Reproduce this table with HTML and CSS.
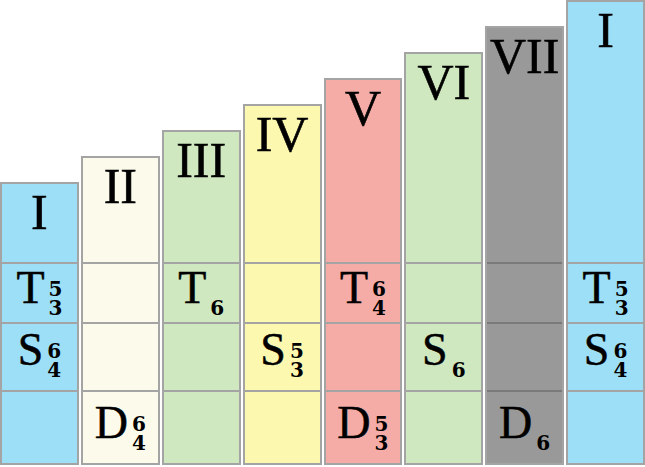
FILE: index.html
```html
<!DOCTYPE html>
<html>
<head>
<meta charset="utf-8">
<link rel="stylesheet" href="styles.css">
</head>
<body>
<div class="stair">
  <div class="col blue h1">
    <div class="head">I</div>
    <div class="row t"><span class="ch">T<span class="fig"><span>5</span><span>3</span></span></span></div>
    <div class="row s"><span class="ch">S<span class="fig"><span>6</span><span>4</span></span></span></div>
    <div class="row d"></div>
  </div>
  <div class="col cream h2">
    <div class="head">II</div>
    <div class="row t"></div>
    <div class="row s"></div>
    <div class="row d"><span class="ch">D<span class="fig"><span>6</span><span>4</span></span></span></div>
  </div>
  <div class="col green h3">
    <div class="head">III</div>
    <div class="row t"><span class="ch">T<span class="fig"><span></span><span>6</span></span></span></div>
    <div class="row s"></div>
    <div class="row d"></div>
  </div>
  <div class="col yellow h4">
    <div class="head">IV</div>
    <div class="row t"></div>
    <div class="row s"><span class="ch">S<span class="fig"><span>5</span><span>3</span></span></span></div>
    <div class="row d"></div>
  </div>
  <div class="col red h5">
    <div class="head">V</div>
    <div class="row t"><span class="ch">T<span class="fig"><span>6</span><span>4</span></span></span></div>
    <div class="row s"></div>
    <div class="row d"><span class="ch">D<span class="fig"><span>5</span><span>3</span></span></span></div>
  </div>
  <div class="col green h6">
    <div class="head">VI</div>
    <div class="row t"></div>
    <div class="row s"><span class="ch">S<span class="fig"><span></span><span>6</span></span></span></div>
    <div class="row d"></div>
  </div>
  <div class="col grey h7">
    <div class="head">VII</div>
    <div class="row t"></div>
    <div class="row s"></div>
    <div class="row d"><span class="ch">D<span class="fig"><span></span><span>6</span></span></span></div>
  </div>
  <div class="col blue h8">
    <div class="head">I</div>
    <div class="row t"><span class="ch">T<span class="fig"><span>5</span><span>3</span></span></span></div>
    <div class="row s"><span class="ch">S<span class="fig"><span>6</span><span>4</span></span></span></div>
    <div class="row d"></div>
  </div>
</div>
</body>
</html>
```
FILE: styles.css
```css
* { box-sizing: border-box; }
html, body { margin: 0; padding: 0; background: #fff; }
body {
  width: 645px;
  height: 467px;
  overflow: hidden;
  font-family: "Liberation Serif", "Times New Roman", serif;
  color: #000;
}

.stair {
  display: flex;
  align-items: flex-end;
  gap: 2px;
  height: 465px;
}

.col {
  flex: 1;
  display: flex;
  flex-direction: column;
  border: 2px solid #a4a4a4;
}
.h1 { height: 283px; }
.h2 { height: 309px; }
.h3 { height: 335px; }
.h4 { height: 361px; }
.h5 { height: 387px; }
.h6 { height: 413px; }
.h7 { height: 439px; }
.h8 { height: 465px; }

.blue { background: #9ddff7; }
.cream { background: #fcfaeb; }
.green { background: #cfe8bf; }
.yellow { background: #fcf8b0; }
.red { background: #f5aca6; }
.grey { background: #999999; }

.head {
  flex: 1;
  text-align: center;
  font-size: 50px;
  line-height: 50px;
  padding-top: 3px;
  -webkit-text-stroke: 0.6px #000;
}

.row {
  border-top: 2px solid #a4a4a4;
  display: flex;
  justify-content: center;
  align-items: flex-start;
}
.grey .row { border-top-color: #7a7a7a; }
.row.t { height: 60px; padding-top: 1px; }
.row.s { height: 68px; padding-top: 3px; }
.row.d { flex: none; height: 73px; padding-top: 8px; }

.ch {
  display: flex;
  align-items: flex-start;
  font-size: 46px;
  line-height: 46px;
  -webkit-text-stroke: 0.5px #000;
}
.fig {
  display: flex;
  flex-direction: column;
  margin-left: 4px;
  margin-top: 15px;
  font-family: "DejaVu Serif", "Liberation Serif", serif;
  font-weight: bold;
  font-size: 20px;
  line-height: 19px;
  -webkit-text-stroke: 0;
}
.fig span { height: 19px; display: block; }
```
